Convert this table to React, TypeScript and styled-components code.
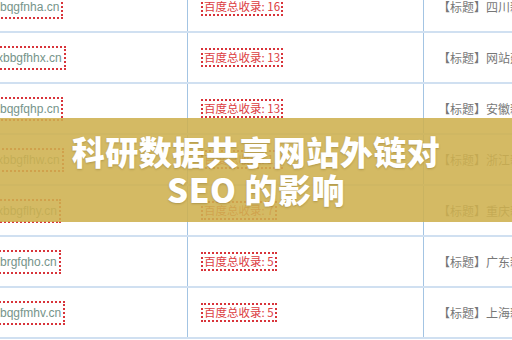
import styled, { createGlobalStyle } from "styled-components";

const GlobalStyle = createGlobalStyle`
  html, body {
    margin: 0;
    padding: 0;
    background: #ffffff;
  }
  body {
    font-family: "Liberation Sans", "Noto Sans CJK SC", sans-serif;
  }
`;

interface RowData {
  domain: string;
  cut: number;
  count: number;
  title: string;
}

const rows: RowData[] = [
  { domain: "bqgfnha.cn", cut: 4, count: 16, title: "四川新闻网站" },
  { domain: "xbbgfhhx.cn", cut: 7, count: 13, title: "网站建设优化" },
  { domain: "bqgfqhp.cn", cut: 4, count: 13, title: "安徽新闻网站" },
  { domain: "xbbgflhw.cn", cut: 7, count: 11, title: "浙江新闻网站" },
  { domain: "xbbgflhy.cn", cut: 7, count: 7, title: "重庆新闻网站" },
  { domain: "brgfqho.cn", cut: 4, count: 5, title: "广东新闻网站" },
  { domain: "bqgfmhv.cn", cut: 4, count: 5, title: "上海新闻网站" },
];

export default function App() {
  return (
    <>
      <GlobalStyle />
      <Page>
        <Table>
          {rows.map((row) => (
            <Row key={row.domain}>
              <DomainCell>
                <DomainBox $cut={row.cut}>{row.domain}</DomainBox>
              </DomainCell>
              <CountCell>
                <CountBox>百度总收录: {row.count}</CountBox>
              </CountCell>
              <TitleCell>【标题】{row.title}</TitleCell>
            </Row>
          ))}
        </Table>
        <Banner>
          <BannerTitle>
            科研数据共享网站外链对
            <br />
            SEO 的影响
          </BannerTitle>
        </Banner>
      </Page>
    </>
  );
}

const Page = styled.div`
  position: relative;
  width: 512px;
  height: 340px;
  overflow: hidden;
  background: #ffffff;
`;

const Table = styled.div`
  display: flex;
  flex-direction: column;
  margin-top: -18px;
`;

const Row = styled.div`
  display: grid;
  grid-template-columns: 187px 236px 1fr;
  height: 51px;
  border-bottom: 2px solid #d0e0f1;
  box-sizing: border-box;
`;

const DomainCell = styled.div`
  display: flex;
  align-items: center;
  overflow: hidden;
`;

const DomainBox = styled.span<{ $cut: number }>`
  margin-left: -${(p) => p.$cut}px;
  padding: 3px 2px;
  border: 2px dotted #d8343a;
  font-size: 12px;
  line-height: 14px;
  color: #76948a;
  white-space: nowrap;
`;

const CountCell = styled.div`
  display: flex;
  align-items: center;
  padding-left: 13px;
  border-left: 1px solid #a3c4e3;
`;

const CountBox = styled.span`
  padding: 1px 1px;
  border: 2px dotted #d8343a;
  font-family: "Noto Sans CJK SC", sans-serif;
  font-size: 11.5px;
  line-height: 13px;
  color: #dc3d3f;
  white-space: nowrap;
`;

const TitleCell = styled.div`
  display: flex;
  align-items: center;
  padding-left: 14px;
  border-left: 1px solid #a3c4e3;
  font-family: "Noto Sans CJK SC", sans-serif;
  font-size: 12px;
  color: #777777;
  white-space: nowrap;
  overflow: hidden;
`;

const Banner = styled.div`
  position: absolute;
  left: 0;
  right: 0;
  top: 118px;
  height: 104px;
  display: flex;
  align-items: center;
  justify-content: center;
  background: rgba(206, 176, 78, 0.88);
`;

const BannerTitle = styled.div`
  font-family: "Noto Sans CJK SC", sans-serif;
  font-weight: 900;
  font-size: 33px;
  line-height: 38px;
  letter-spacing: 0.5px;
  color: #ffffff;
  text-align: center;
  text-shadow: 0 1px 2px rgba(90, 70, 20, 0.3);
`;
